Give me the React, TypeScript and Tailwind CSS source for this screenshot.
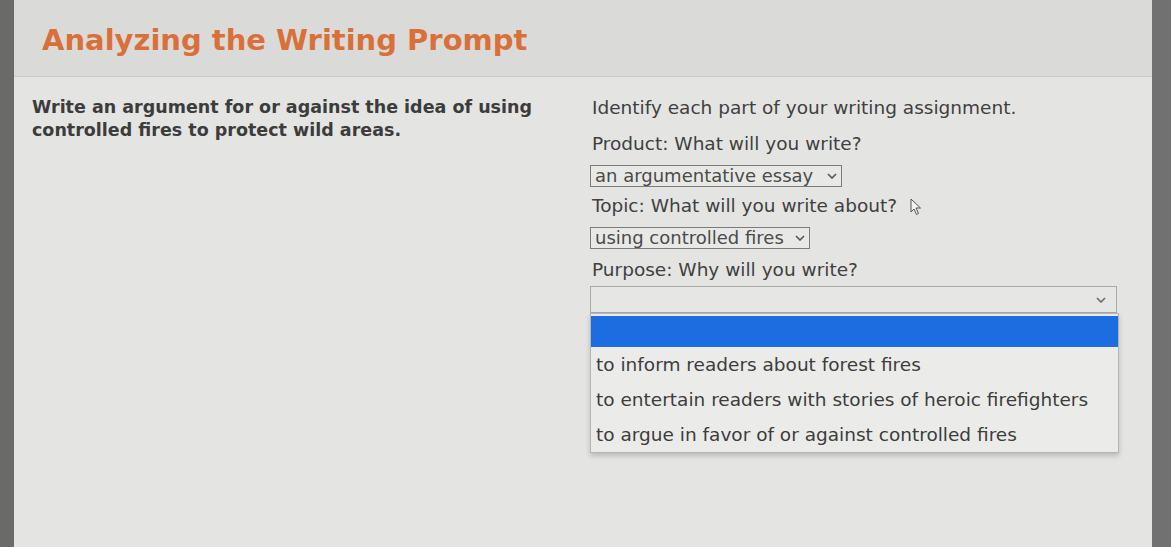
import React from 'react';

const Chevron = ({ className = '' }: { className?: string }) => (
  <svg viewBox="0 0 10 6" className={className} fill="none" stroke="currentColor" strokeWidth="1.6">
    <path d="M1 1 L5 5 L9 1" />
  </svg>
);

const purposeOptions = [
  'to inform readers about forest fires',
  'to entertain readers with stories of heroic firefighters',
  'to argue in favor of or against controlled fires',
];

export default function App() {
  return (
    <div
      className="flex w-[1171px] h-[547px] overflow-hidden bg-[#6f706e]"
      style={{ fontFamily: '"DejaVu Sans", "Liberation Sans", sans-serif' }}
    >
      <div className="w-[14px] shrink-0 bg-[#6a6b69]" />
      <div className="flex-1 flex flex-col bg-[#e4e5e2]">
        {/* header band */}
        <div className="h-[77px] shrink-0 bg-[#dadbd8] border-b border-[#c9cac7] flex items-start">
          <h1 className="ml-[28px] mt-[20px] text-[29px] leading-[40px] font-bold text-[#d9703a]">
            Analyzing the Writing Prompt
          </h1>
        </div>

        <div className="flex pt-[19px]">
          <div className="w-[576px] shrink-0 pl-[18px] text-[17.5px] leading-[23px] font-bold text-[#3b3c3b]">
            <p>Write an argument for or against the idea of using</p>
            <p>controlled fires to protect wild areas.</p>
          </div>

          <div className="flex flex-col text-[18.5px] text-[#3f403f]">
            <p className="leading-[24px] ml-[2px]">Identify each part of your writing assignment.</p>
            <p className="leading-[24px] mt-[12px] ml-[2px]">Product: What will you write?</p>
            <div className="mt-[9px] w-[252px] h-[22px] border border-[#7c7d7b] bg-[#e8e9e6] flex items-center justify-between pl-[4px] pr-[4px] text-[18px] leading-none text-[#4a4b4a]">
              <span>an argumentative essay</span>
              <Chevron className="w-[10px] h-[6px] text-[#555]" />
            </div>
            <p className="leading-[24px] mt-[7px] ml-[2px]">Topic: What will you write about?</p>
            <div className="mt-[9px] w-[220px] h-[22px] border border-[#7c7d7b] bg-[#e8e9e6] flex items-center justify-between pl-[4px] pr-[4px] text-[18px] leading-none text-[#4a4b4a]">
              <span>using controlled fires</span>
              <Chevron className="w-[10px] h-[6px] text-[#555]" />
            </div>
            <p className="leading-[24px] mt-[9px] ml-[2px]">Purpose: Why will you write?</p>

            <div className="relative mt-[4px] w-[527px]">
              <div className="h-[27px] border border-[#a9aaa7] bg-[#e6e7e4] flex items-center justify-end pr-[10px]">
                <Chevron className="w-[10px] h-[6px] text-[#6a6b69]" />
              </div>
              <div className="w-[529px] border border-[#b5b6b3] bg-[#ebece9] shadow-[0_3px_5px_rgba(0,0,0,0.18)] text-[18.5px] text-[#3c3d3c]">
                <div className="h-[31px] mt-[2px] bg-[#1c6de0]" />
                {purposeOptions.map((opt) => (
                  <div key={opt} className="h-[35px] flex items-center px-[5px]">
                    {opt}
                  </div>
                ))}
              </div>
              {/* mouse cursor */}
              <svg
                viewBox="0 0 12 18"
                className="absolute w-[12px] h-[18px] left-[320px] top-[-88px]"
                fill="#f2f2f0"
                stroke="#555"
                strokeWidth="1"
              >
                <path d="M1 1 L1 14 L4 11 L6.5 16.5 L8.5 15.5 L6 10 L10.5 10 Z" />
              </svg>
            </div>
          </div>
        </div>
      </div>
      <div className="w-[19px] shrink-0 bg-[#707170]" />
    </div>
  );
}
